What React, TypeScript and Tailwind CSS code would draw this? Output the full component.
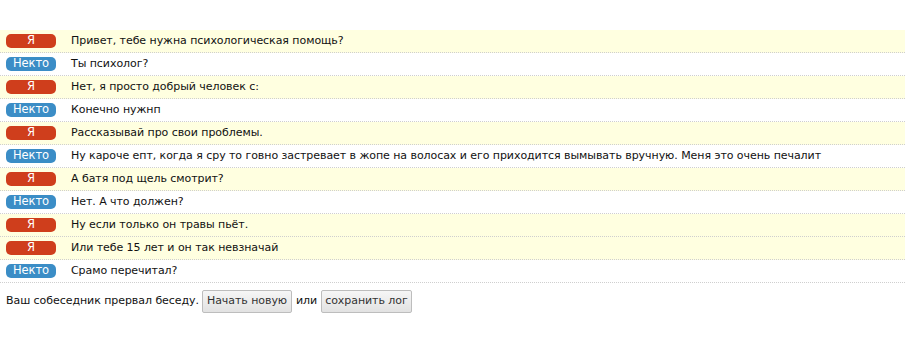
import React from "react";

type Msg = { me: boolean; text: string };

const msgs: Msg[] = [
  { me: true, text: "Привет, тебе нужна психологическая помощь?" },
  { me: false, text: "Ты психолог?" },
  { me: true, text: "Нет, я просто добрый человек с:" },
  { me: false, text: "Конечно нужнп" },
  { me: true, text: "Рассказывай про свои проблемы." },
  { me: false, text: "Ну кароче епт, когда я сру то говно застревает в жопе на волосах и его приходится вымывать вручную. Меня это очень печалит" },
  { me: true, text: "А батя под щель смотрит?" },
  { me: false, text: "Нет. А что должен?" },
  { me: true, text: "Ну если только он травы пьёт." },
  { me: true, text: "Или тебе 15 лет и он так невзначай" },
  { me: false, text: "Срамо перечитал?" },
];

export default function App() {
  return (
    <div className="w-[905px] h-[339px] bg-white text-[11px] tracking-[-0.06px] text-[#111] pt-[30px]" style={{ fontFamily: '"DejaVu Sans", sans-serif' }}>
      <div className="flex flex-col">
        {msgs.map((m, i) => (
          <div
            key={i}
            className={`flex items-center h-[23px] border-b border-dotted border-[#cfcfcf] ${m.me ? "bg-[#ffffe0]" : "bg-white"}`}
          >
            <span
              className={`ml-[6px] w-[50px] h-[14px] rounded-[5px] flex items-center justify-center text-white text-[11.5px] leading-none ${m.me ? "bg-[#cf3e1c]" : "bg-[#3b8dc6]"}`}
            >
              {m.me ? "Я" : "Некто"}
            </span>
            <span className="ml-[15px] whitespace-nowrap">{m.text}</span>
          </div>
        ))}
      </div>
      <div className="flex items-center mt-[6px] ml-[6px] h-[24px]">
        <span>Ваш собеседник прервал беседу.</span>
        <button className="ml-[3px] h-[23px] px-[4px] border border-[#bdbdbd] rounded-[2px] bg-gradient-to-b from-[#f6f6f6] to-[#e2e2e2] text-[11px] text-[#333]">
          Начать новую
        </button>
        <span className="mx-[4px]">или</span>
        <button className="h-[23px] px-[3px] border border-[#bdbdbd] rounded-[2px] bg-gradient-to-b from-[#f6f6f6] to-[#e2e2e2] text-[11px] text-[#333]">
          сохранить лог
        </button>
      </div>
    </div>
  );
}
